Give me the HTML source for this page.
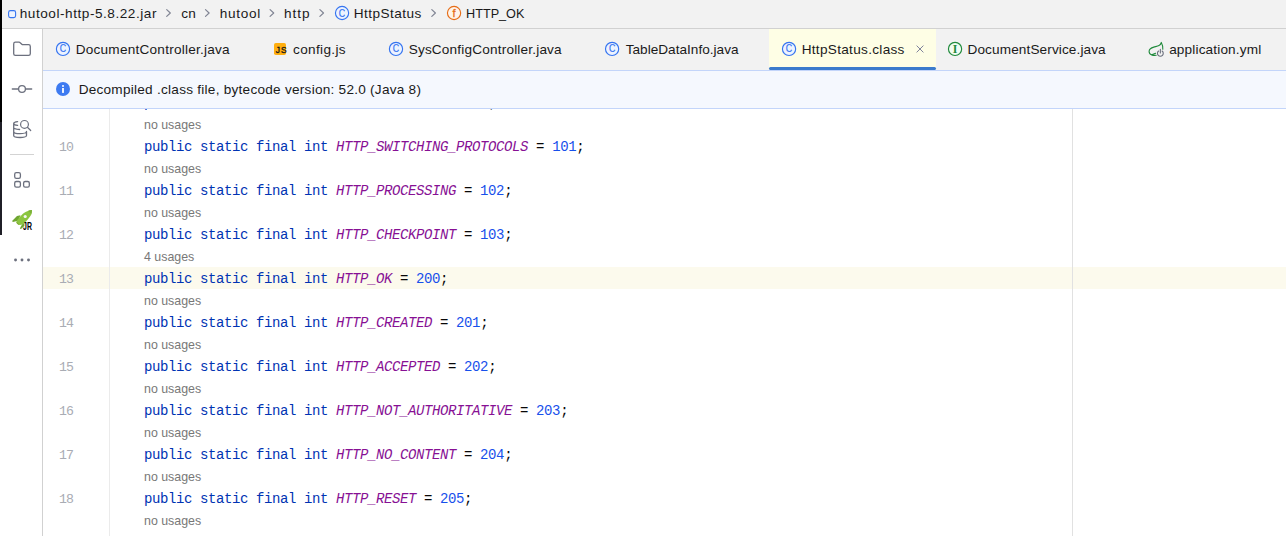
<!DOCTYPE html>
<html><head><meta charset="utf-8">
<style>
*{margin:0;padding:0;box-sizing:border-box}
html,body{width:1286px;height:536px;overflow:hidden;background:#fff}
body{font-family:"Liberation Sans",sans-serif;font-size:13.6px;color:#000;position:relative}
.abs{position:absolute}
#nav{left:0;top:0;width:1286px;height:29px;background:#f2f2f2;border-bottom:1px solid #d1d1d1}
.t{position:absolute;line-height:18px;font-size:13.6px;color:#1a1a1a;white-space:nowrap}
#nav .t{top:5px}
#side{left:0;top:29px;width:43px;height:507px;background:#fff;border-right:1px solid #d1d1d1}
#black{left:0;top:0;width:2px;height:122px;background:#000}
#black2{left:0;top:122px;width:2px;height:113px;background:#1f1f27}
#tabs{left:43px;top:29px;width:1243px;height:41px;background:#f2f2f2}
#tabs .t{top:12px}
#seltab{left:726px;top:0;width:167px;height:41px;background:#fefee5}
#selund{left:726px;top:38px;width:167px;height:3px;background:#3b7bcc;border-radius:1.5px}
#banner{left:43px;top:70px;width:1243px;height:39px;background:#f5f8fe;border-top:1px solid #c3d5fa;border-bottom:1px solid #c3d5fa}
#banner .t{left:36px;top:10px}
#editor{left:43px;top:109px;width:1243px;height:427px;background:#fff;overflow:hidden}
#gutline{left:66px;top:0;width:1px;height:427px;background:#ebebeb}
#margin{left:1029px;top:0;width:1px;height:427px;background:#e1e1e1}
#cur{left:0;top:158px;width:1243px;height:22px;background:#fcfaed}
.ln{position:absolute;left:15.9px;margin-top:2px;font-family:"Liberation Mono",monospace;font-size:13.2px;letter-spacing:-0.8px;line-height:22px;color:#a9acb4}
.code{position:absolute;left:101px;margin-top:1px;font-family:"Liberation Mono",monospace;font-size:14px;letter-spacing:-0.4px;line-height:22px;color:#080808;white-space:pre}
.code b{font-weight:normal;color:#0033b3}
.code i{color:#871094;font-style:italic}
.code u{text-decoration:none;color:#1750eb}
.hint{position:absolute;left:101px;margin-top:1px;font-size:12.4px;line-height:22px;color:#787878;white-space:nowrap}
#icons{left:0;top:0}
</style></head><body>
<div id="nav" class="abs">
<span class="t" id="n1" style="left:19.75px;letter-spacing:0.536px">hutool-http-5.8.22.jar</span>
<span class="t" id="n2" style="left:181.31px;letter-spacing:0.108px">cn</span>
<span class="t" id="n3" style="left:219.64px;letter-spacing:0.739px">hutool</span>
<span class="t" id="n4" style="left:283.88px;letter-spacing:1.006px">http</span>
<span class="t" id="n5" style="left:353.68px;letter-spacing:0.474px">HttpStatus</span>
<span class="t" id="n6" style="left:465.5px;transform:scaleX(0.932);transform-origin:0 0">HTTP_OK</span>
</div>
<div id="side" class="abs"></div>
<div id="black" class="abs"></div><div id="black2" class="abs"></div>
<div id="tabs" class="abs">
<div id="seltab" class="abs"></div><div id="selund" class="abs"></div>
<span class="t" id="t1" style="left:32.72px;letter-spacing:0.229px">DocumentController.java</span>
<span class="t" id="t2" style="left:250.04px;letter-spacing:0.337px">config.js</span>
<span class="t" id="t3" style="left:365.68px;letter-spacing:0.180px">SysConfigController.java</span>
<span class="t" id="t4" style="left:582.74px;letter-spacing:0.011px">TableDataInfo.java</span>
<span class="t" id="t5" style="left:758.65px;letter-spacing:0.302px">HttpStatus.class</span>
<span class="t" id="t6" style="left:924.53px;letter-spacing:0.114px">DocumentService.java</span>
<span class="t" id="t7" style="left:1126.17px;letter-spacing:0.153px">application.yml</span>
</div>
<div id="banner" class="abs"><span class="t" id="b1" style="left:35.64px;letter-spacing:0.253px">Decompiled .class file, bytecode version: 52.0 (Java 8)</span></div>
<div id="editor" class="abs">
<div id="cur" class="abs"></div>
<div id="gutline" class="abs"></div>
<div id="margin" class="abs"></div>
<div class="code" style="top:-18px"><b>public static final int</b> <i>HTTP_CONTINUE</i> = <u>100</u>;</div>
<div class="hint" style="top:4px">no usages</div>
<div class="ln" style="top:26px">10</div><div class="code" style="top:26px"><b>public static final int</b> <i>HTTP_SWITCHING_PROTOCOLS</i> = <u>101</u>;</div>
<div class="hint" style="top:48px">no usages</div>
<div class="ln" style="top:70px">11</div><div class="code" style="top:70px"><b>public static final int</b> <i>HTTP_PROCESSING</i> = <u>102</u>;</div>
<div class="hint" style="top:92px">no usages</div>
<div class="ln" style="top:114px">12</div><div class="code" style="top:114px"><b>public static final int</b> <i>HTTP_CHECKPOINT</i> = <u>103</u>;</div>
<div class="hint" style="top:136px">4 usages</div>
<div class="ln" style="top:158px">13</div><div class="code" style="top:158px"><b>public static final int</b> <i>HTTP_OK</i> = <u>200</u>;</div>
<div class="hint" style="top:180px">no usages</div>
<div class="ln" style="top:202px">14</div><div class="code" style="top:202px"><b>public static final int</b> <i>HTTP_CREATED</i> = <u>201</u>;</div>
<div class="hint" style="top:224px">no usages</div>
<div class="ln" style="top:246px">15</div><div class="code" style="top:246px"><b>public static final int</b> <i>HTTP_ACCEPTED</i> = <u>202</u>;</div>
<div class="hint" style="top:268px">no usages</div>
<div class="ln" style="top:290px">16</div><div class="code" style="top:290px"><b>public static final int</b> <i>HTTP_NOT_AUTHORITATIVE</i> = <u>203</u>;</div>
<div class="hint" style="top:312px">no usages</div>
<div class="ln" style="top:334px">17</div><div class="code" style="top:334px"><b>public static final int</b> <i>HTTP_NO_CONTENT</i> = <u>204</u>;</div>
<div class="hint" style="top:356px">no usages</div>
<div class="ln" style="top:378px">18</div><div class="code" style="top:378px"><b>public static final int</b> <i>HTTP_RESET</i> = <u>205</u>;</div>
<div class="hint" style="top:400px">no usages</div>
</div>
<svg id="icons" class="abs" width="1286" height="536" viewBox="0 0 1286 536" fill="none">
<!-- nav jar icon -->
<rect x="8.6" y="10.6" width="7" height="7" rx="1.8" fill="#edf3ff" stroke="#3574f0" stroke-width="1.1"/>
<!-- nav chevrons -->
<g stroke="#818594" stroke-width="1.2" stroke-linecap="round" stroke-linejoin="round">
<path d="M166.7 9.6l3.6 3.4-3.6 3.4"/>
<path d="M205.5 9.6l3.6 3.4-3.6 3.4"/>
<path d="M270.1 9.6l3.6 3.4-3.6 3.4"/>
<path d="M319.9 9.6l3.6 3.4-3.6 3.4"/>
<path d="M431.8 9.6l3.6 3.4-3.6 3.4"/>
</g>
<!-- class icons -->
<g id="cicons" fill="#edf3ff" stroke="#3574f0" stroke-width="1.15">
<circle cx="342.05" cy="13" r="6.6"/>
<circle cx="63" cy="48.9" r="6.6"/>
<circle cx="396" cy="48.9" r="6.6"/>
<circle cx="612.1" cy="48.9" r="6.6"/>
<circle cx="789.05" cy="48.9" r="6.6"/>
</g>
<g font-family="Liberation Sans, sans-serif" font-size="10.2" fill="#3574f0" stroke="#3574f0" stroke-width="0.2" text-anchor="middle" textLength="6.4" lengthAdjust="spacingAndGlyphs">
<text x="342.05" y="16.55" textLength="6.4" lengthAdjust="spacingAndGlyphs">C</text>
<text x="63" y="52.45" textLength="6.4" lengthAdjust="spacingAndGlyphs">C</text>
<text x="396" y="52.45" textLength="6.4" lengthAdjust="spacingAndGlyphs">C</text>
<text x="612.1" y="52.45" textLength="6.4" lengthAdjust="spacingAndGlyphs">C</text>
<text x="789.05" y="52.45" textLength="6.4" lengthAdjust="spacingAndGlyphs">C</text>
</g>
<!-- field icon -->
<circle cx="454.05" cy="13" r="6.6" fill="#fff4eb" stroke="#e66d17" stroke-width="1.15"/>
<text x="454" y="17" font-family="Liberation Sans, sans-serif" font-size="11" fill="#e66d17" stroke="#e66d17" stroke-width="0.3" text-anchor="middle">f</text>
<!-- interface icon -->
<circle cx="955.05" cy="48.9" r="6.6" fill="#f2fcf3" stroke="#208a3c" stroke-width="1.15"/>
<text x="955.05" y="52.8" font-family="Liberation Serif, serif" font-size="11.8" font-weight="bold" fill="#208a3c" text-anchor="middle">I</text>
<!-- JS icon -->
<rect x="274" y="43" width="12" height="12" rx="1.8" fill="#ffaf0f"/>
<text x="275.8" y="52.9" font-family="Liberation Sans, sans-serif" font-size="8.4" fill="#1a1a1a" stroke="#1a1a1a" stroke-width="0.35" letter-spacing="0.9">JS</text>
<!-- close X -->
<path d="M916.6 45.6l6.8 6.8M923.4 45.6l-6.8 6.8" stroke="#7f839c" stroke-width="1"/>
<!-- spring icon -->
<path d="M1162.8 49.2C1162.9 46.5 1162.3 44.2 1161.3 42.4C1160.9 44 1160.3 45 1159 45.6C1157.5 46.4 1155.5 46.6 1153.8 47.1C1151 47.9 1149.1 49.4 1149.1 51.4C1149.1 53 1150.2 54.3 1151.7 54.9C1153 55.4 1154.6 55.5 1156.2 55.3M1151.7 54.7C1153.1 54.4 1154.4 53.9 1155.6 53.3" stroke="#208a3c" stroke-width="1.1" stroke-linecap="round" stroke-linejoin="round"/>
<circle cx="1160.35" cy="53.35" r="3.6" fill="#f2f2f2"/>
<path d="M1158.6 51A2.9 2.9 0 1 0 1162.1 51M1160.35 49.3V52.9" stroke="#6c707e" stroke-width="1.1" stroke-linecap="round"/>
<!-- info icon -->
<circle cx="63" cy="89" r="7" fill="#3d7af1"/>
<circle cx="63" cy="86" r="1" fill="#fff"/>
<rect x="62.1" y="88" width="1.8" height="4.9" fill="#fff"/>
<!-- sidebar: folder -->
<g stroke="#6c707e" stroke-width="1.3" stroke-linecap="round" stroke-linejoin="round">
<path d="M13.7 43.9Q13.7 42.2 15.4 42.2H19Q19.7 42.2 20.2 42.7L21.8 44.2Q22.3 44.7 23.1 44.7H28.6Q30.3 44.7 30.3 46.4V53.7Q30.3 55.4 28.6 55.4H15.4Q13.7 55.4 13.7 53.7Z"/>
<!-- commit -->
<path d="M12.3 89H18.2M25.8 89H31.7"/>
<circle cx="22" cy="89" r="3.4"/>
<!-- db search -->
<path d="M17.6 121.6C15.3 121.9 13.7 122.5 13.7 123.4V135.4C13.7 136.6 16.5 137.5 20.1 137.5C23.6 137.5 26.5 136.6 26.5 135.4V131.4M13.7 131.4C13.7 132.6 16.5 133.6 20.1 133.6C23.6 133.6 26.5 132.6 26.5 131.4M13.7 127.4C13.7 128.4 16 129.2 19.6 129.5M13.7 123.4C13.7 124.4 15.2 125.1 17.6 125.4" stroke-width="1.3"/>
<circle cx="24.5" cy="124.4" r="3.9" stroke-width="1.2"/>
<path d="M27.4 127.3L30.7 130.5" stroke-width="1.2"/>
<!-- structure -->
<rect x="14.7" y="172.65" width="5.7" height="5.7" rx="1.6"/>
<rect x="14.7" y="181.5" width="5.7" height="5.7" rx="1.6"/>
<rect x="23.6" y="181.5" width="5.7" height="5.7" rx="1.6"/>
</g>
<rect x="10" y="154" width="24" height="1" fill="#d3d3d3"/>
<!-- rocket -->
<path d="M20.5 215.2L17 216.1L12.1 221L12.8 221.9L18.2 220.7Z" fill="#6fa531"/>
<path d="M24.4 222.6L22 224.6L19.8 228.6L21 229L24.4 226Z" fill="#6fa531"/>
<path d="M31.95 210C30.5 210 29.2 210.4 27.9 210.9C26.6 211.4 25.4 212 24.3 212.7C23.1 213.5 22.1 214.4 21.2 215.4C20.2 216.4 19.3 217.4 18.5 218.5C17.8 219.4 17.2 220.3 16.7 221.2C16.4 221.7 16.2 222.2 16.3 222.6C16.4 223.2 16.8 223.6 17.2 223.9C17.9 224.4 18.7 224.8 19.6 225C20.8 224.8 21.9 224.4 23 223.9C24.1 223.1 25.1 222.2 26.1 221.2C27.2 220.1 28.3 218.9 29.3 217.6C30.1 216.6 30.8 215.6 31.3 214.5C31.7 213.6 31.9 212.7 31.9 211.8C32 211.2 32 210.6 31.95 210Z" fill="#8cc540"/>
<path d="M27.9 210.9C29.2 210.4 30.5 210 31.95 210C32 211.5 31.7 213 31.05 214.3C30.5 212.8 29.4 211.6 27.9 210.9Z" fill="#7cb03a"/>
<path d="M16.5 222.3L18.9 224.5" stroke="#7b9b2c" stroke-width="0.8"/>
<circle cx="25.2" cy="216.5" r="1.55" fill="#f6f6f6"/>
<text x="23.1" y="229.7" font-family="Liberation Sans, sans-serif" font-size="10.4" font-weight="bold" fill="#000" textLength="8.9" lengthAdjust="spacingAndGlyphs">JR</text>
<!-- more dots -->
<g fill="#6c707e"><circle cx="15.55" cy="260" r="1.45"/><circle cx="22" cy="260" r="1.45"/><circle cx="28.5" cy="260" r="1.45"/></g>

</svg>
</body></html>
